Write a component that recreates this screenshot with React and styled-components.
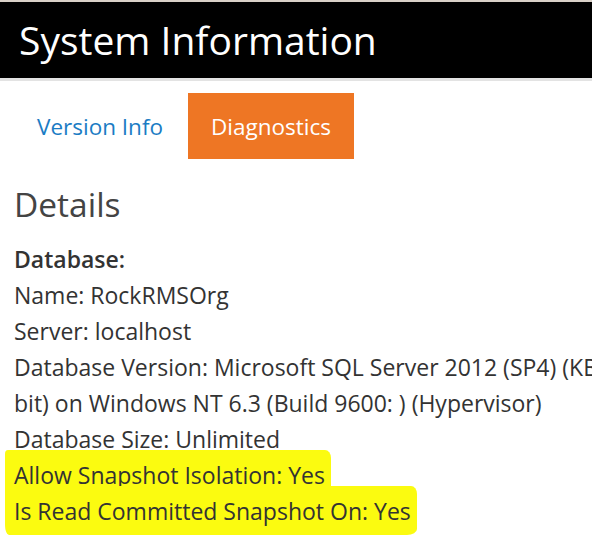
import React from "react";
import styled, { createGlobalStyle } from "styled-components";

const GlobalStyle = createGlobalStyle`
  html, body {
    margin: 0;
    padding: 0;
    background: #fff;
    overflow: hidden;
  }
  body {
    font-family: "Open Sans", "Noto Sans", sans-serif;
    color: #333;
  }
`;

const Page = styled.div`
  width: 592px;
  height: 540px;
  overflow: hidden;
  border-top: 2px solid #d9d0c7;
  box-sizing: border-box;
`;

const Header = styled.header`
  background: #000;
  height: 76px;
  display: flex;
  align-items: center;
  padding-left: 19px;
  border-bottom: 3px solid #e3e3e3;

  h1 {
    margin: 0 0 2px;
    font-weight: 400;
    font-size: 39px;
    color: #fff;
    white-space: nowrap;
  }
`;

const Tabs = styled.nav`
  display: flex;
  gap: 2px;
  padding: 12px 0 0 14px;
`;

const Tab = styled.a`
  display: flex;
  align-items: center;
  height: 66px;
  padding: 0 23px;
  font-size: 22.5px;
  text-decoration: none;
  color: ${(p) => (p.$active ? "#fff" : "#1b7cc4")};
  background: ${(p) => (p.$active ? "#ee7624" : "transparent")};
`;

const Body = styled.section`
  padding: 0 14px;
`;

const Title = styled.h2`
  margin: 21px 0 13px;
  font-weight: 400;
  font-size: 33.5px;
  line-height: 48px;
  color: #444;
`;

const Line = styled.div`
  font-size: 23px;
  line-height: 36px;
  white-space: nowrap;
  font-weight: ${(p) => (p.$bold ? 600 : 400)};
`;

// hand-drawn highlighter stroke
const Marker = styled.span`
  background: #fbfb10;
  padding: 9px 6px 8px 9px;
  margin-left: -9px;
  border-radius: 3px 6px 10px 4px / 4px 8px 6px 10px;
`;

export default function App() {
  return (
    <Page>
      <GlobalStyle />
      <Header>
        <h1>System Information</h1>
      </Header>
      <Tabs>
        <Tab href="#">Version Info</Tab>
        <Tab href="#" $active>Diagnostics</Tab>
      </Tabs>
      <Body>
        <Title>Details</Title>
        <Line $bold>Database:</Line>
        <Line>Name: RockRMSOrg</Line>
        <Line>Server: localhost</Line>
        <Line>Database Version: Microsoft SQL Server 2012 (SP4) (KB4018073) - 11.0.7001.0 (X64)</Line>
        <Line>bit) on Windows NT 6.3 (Build 9600: ) (Hypervisor)</Line>
        <Line>Database Size: Unlimited</Line>
        <Line><Marker>Allow Snapshot Isolation: Yes</Marker></Line>
        <Line><Marker>Is Read Committed Snapshot On: Yes</Marker></Line>
      </Body>
    </Page>
  );
}
